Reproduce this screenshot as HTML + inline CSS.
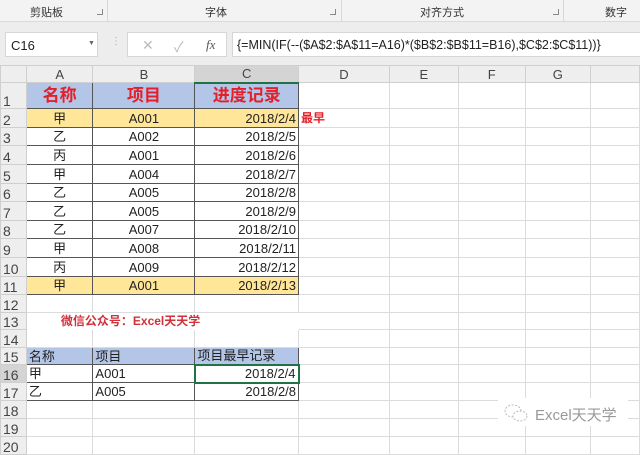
<!DOCTYPE html>
<html><head><meta charset="utf-8"><style>
*{margin:0;padding:0;box-sizing:border-box}
body{width:640px;height:441px;overflow:hidden;background:#fff;font-family:"Liberation Sans","Noto Sans CJK SC",sans-serif;position:relative;font-size:13px;color:#222}
.abs{position:absolute}
#rib{left:0;top:0;width:640px;height:22px;background:#f3f3f3;border-bottom:1px solid #dadada}
#rib span{position:absolute;top:4px;font-size:11px;color:#333}
.sep{position:absolute;top:0;width:1px;height:22px;background:#d8d8d8}
.lch{position:absolute;top:9px;width:6px;height:6px;border-right:1px solid #888;border-bottom:1px solid #888}
#fb{left:0;top:22px;width:640px;height:43px;background:#ededed}
.box{position:absolute;background:#fff;border:1px solid #d6d6d6}
table{position:absolute;left:0;top:65px;border-collapse:collapse;table-layout:fixed}
td{border:1px solid #dcdcdc;padding:0 2px;white-space:nowrap;overflow:visible;font-size:13px;line-height:1}
td.h{background:#eeeeee;color:#444;text-align:center;border-color:#cfcfcf}
td.r{background:#eeeeee;color:#444;text-align:left;padding-left:2px;border-color:#cfcfcf;font-size:14px;vertical-align:bottom}
.t td.c{border:1px solid #555}
.bl{background:#b4c6e7}
.yl{background:#ffe699}
.hd{color:#e3202a;font-weight:bold;font-size:17px;text-align:center}
.ce{text-align:center}
.ri{text-align:right}
</style></head><body>
<div id="rib" class="abs">
<span style="left:30px">剪贴板</span><div class="lch" style="left:97px"></div><div class="sep" style="left:107px"></div>
<span style="left:205px">字体</span><div class="lch" style="left:330px"></div><div class="sep" style="left:341px"></div>
<span style="left:420px">对齐方式</span><div class="lch" style="left:553px"></div><div class="sep" style="left:563px"></div>
<span style="left:605px">数字</span>
</div>
<div id="fb" class="abs">
<div class="box" style="left:5px;top:10px;width:93px;height:25px;"><span style="position:absolute;left:5px;top:5px;font-size:13px">C16</span><span style="position:absolute;left:82px;top:7px;font-size:7px;color:#666">▼</span></div>
<span style="position:absolute;left:111px;top:14px;color:#aaa;font-size:10px">⋮</span>
<div class="box" style="left:127px;top:10px;width:100px;height:25px;"><span style="position:absolute;left:14px;top:4px;color:#bbb;font-size:14px">✕</span><span style="position:absolute;left:46px;top:4px;color:#bbb;font-size:14px">✓</span><span style="position:absolute;left:78px;top:4px;color:#555;font-style:italic;font-family:'Liberation Serif',serif;font-size:13px">fx</span></div>
<div class="box" style="left:232px;top:10px;width:410px;height:25px;"><span style="position:absolute;left:4px;top:5px;font-size:12.5px;color:#222">{=MIN(IF(--($A$2:$A$11=A16)*($B$2:$B$11=B16),$C$2:$C$11))}</span></div>
</div>
<table class="t">
<colgroup><col style="width:26px"><col style="width:67px"><col style="width:103px"><col style="width:104px"><col style="width:92px"><col style="width:70px"><col style="width:68px"><col style="width:66px"><col style="width:50px"></colgroup>
<tr style="height:17px"><td class="h"></td><td class="h">A</td><td class="h">B</td><td class="h" style="background:#d4d4d4;border-bottom:2px solid #217346">C</td><td class="h">D</td><td class="h">E</td><td class="h">F</td><td class="h">G</td><td class="h"></td></tr>
<tr style="height:26px"><td class="r">1</td><td class="c bl hd">名称</td><td class="c bl hd">项目</td><td class="c bl hd">进度记录</td><td></td><td></td><td></td><td></td><td></td></tr>
<tr style="height:19px"><td class="r">2</td><td class="c yl ce">甲</td><td class="c yl ce">A001</td><td class="c yl ri">2018/2/4</td><td style="color:#e3202a;font-size:12px;font-weight:bold">最早</td><td></td><td></td><td></td><td></td></tr>
<tr style="height:18px"><td class="r">3</td><td class="c ce">乙</td><td class="c ce">A002</td><td class="c ri">2018/2/5</td><td></td><td></td><td></td><td></td><td></td></tr>
<tr style="height:19px"><td class="r">4</td><td class="c ce">丙</td><td class="c ce">A001</td><td class="c ri">2018/2/6</td><td></td><td></td><td></td><td></td><td></td></tr>
<tr style="height:19px"><td class="r">5</td><td class="c ce">甲</td><td class="c ce">A004</td><td class="c ri">2018/2/7</td><td></td><td></td><td></td><td></td><td></td></tr>
<tr style="height:18px"><td class="r">6</td><td class="c ce">乙</td><td class="c ce">A005</td><td class="c ri">2018/2/8</td><td></td><td></td><td></td><td></td><td></td></tr>
<tr style="height:19px"><td class="r">7</td><td class="c ce">乙</td><td class="c ce">A005</td><td class="c ri">2018/2/9</td><td></td><td></td><td></td><td></td><td></td></tr>
<tr style="height:18px"><td class="r">8</td><td class="c ce">乙</td><td class="c ce">A007</td><td class="c ri">2018/2/10</td><td></td><td></td><td></td><td></td><td></td></tr>
<tr style="height:19px"><td class="r">9</td><td class="c ce">甲</td><td class="c ce">A008</td><td class="c ri">2018/2/11</td><td></td><td></td><td></td><td></td><td></td></tr>
<tr style="height:19px"><td class="r">10</td><td class="c ce">丙</td><td class="c ce">A009</td><td class="c ri">2018/2/12</td><td></td><td></td><td></td><td></td><td></td></tr>
<tr style="height:18px"><td class="r">11</td><td class="c yl ce">甲</td><td class="c yl ce">A001</td><td class="c yl ri">2018/2/13</td><td></td><td></td><td></td><td></td><td></td></tr>
<tr style="height:18px"><td class="r">12</td><td></td><td></td><td></td><td></td><td></td><td></td><td></td><td></td></tr>
<tr style="height:17px"><td class="r">13</td><td colspan="3" style="padding-left:34px;color:#d0303a;font-weight:bold;font-size:12px;border-color:#fff">微信公众号：Excel天天学</td><td></td><td></td><td></td><td></td><td></td></tr>
<tr style="height:18px"><td class="r">14</td><td></td><td></td><td></td><td></td><td></td><td></td><td></td><td></td></tr>
<tr style="height:17px"><td class="r">15</td><td class="c bl">名称</td><td class="c bl">项目</td><td class="c bl">项目最早记录</td><td></td><td></td><td></td><td></td><td></td></tr>
<tr style="height:18px"><td class="r" style="background:#d4d4d4">16</td><td class="c">甲</td><td class="c">A001</td><td class="c ri" style="border:2px solid #217346">2018/2/4</td><td></td><td></td><td></td><td></td><td></td></tr>
<tr style="height:18px"><td class="r">17</td><td class="c">乙</td><td class="c">A005</td><td class="c ri">2018/2/8</td><td></td><td></td><td></td><td></td><td></td></tr>
<tr style="height:18px"><td class="r">18</td><td></td><td></td><td></td><td></td><td></td><td></td><td></td><td></td></tr>
<tr style="height:18px"><td class="r">19</td><td></td><td></td><td></td><td></td><td></td><td></td><td></td><td></td></tr>
<tr style="height:18px"><td class="r">20</td><td></td><td></td><td></td><td></td><td></td><td></td><td></td><td></td></tr>
</table>
<div class="abs" style="left:498px;top:398px;width:130px;height:28px;background:#fff"></div>
<svg class="abs" style="left:503px;top:403px" width="26" height="20" viewBox="0 0 26 20"><ellipse cx="10" cy="8" rx="8" ry="6" fill="none" stroke="#bbb" stroke-dasharray="2 1.5"/><ellipse cx="17" cy="13" rx="7" ry="5" fill="#fff" stroke="#bbb" stroke-dasharray="2 1.5"/></svg>
<span class="abs" style="left:535px;top:404px;color:#999;font-size:15px">Excel天天学</span>
</body></html>
